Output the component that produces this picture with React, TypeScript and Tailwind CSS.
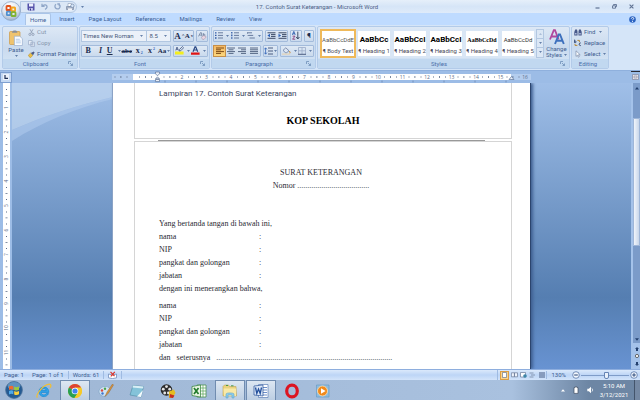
import type { ReactNode } from 'react';

// ── Data ──────────────────────────────────────────────────────────────────────

const tabs = ['Home', 'Insert', 'Page Layout', 'References', 'Mailings', 'Review', 'View'];

const styleItems = [
  { name: 'Body Text', sample: 'AaBbCcDdE', look: 'text-[6px] text-[#555]' },
  { name: 'Heading 1', sample: 'AaBbCc', look: 'text-[8px] font-bold text-black' },
  { name: 'Heading 2', sample: 'AaBbCcI', look: 'text-[8px] font-bold text-black' },
  { name: 'Heading 3', sample: 'AaBbCcI', look: 'text-[8px] font-bold text-black' },
  { name: 'Heading 4', sample: 'AaBbCcDd', look: "text-[6px] font-bold text-black font-['Liberation_Serif',serif]" },
  { name: 'Heading 5', sample: 'AaBbCcDd', look: 'text-[6px] text-[#333]' },
];

const fields = ['nama', 'NIP', 'pangkat dan golongan', 'jabatan'];

// ── Small drawings ────────────────────────────────────────────────────────────

function Caret({ className = '' }: { className?: string }) {
  return (
    <svg width="3" height="2" viewBox="0 0 4 2" className={`shrink-0 ${className}`} aria-hidden="true">
      <path d="M0 0h4L2 2z" fill="#3e5f92" />
    </svg>
  );
}

function Launcher() {
  return (
    <svg width="5" height="5" viewBox="0 0 5 5" fill="none" stroke="#6f8fb8" aria-hidden="true">
      <path d="M.5 3V.5H3M2 2l2.5 2.5M4.5 2.5v2h-2" strokeWidth=".8" />
    </svg>
  );
}

function OfficeLogo() {
  return (
    <svg width="20" height="20" viewBox="0 0 20 20" aria-hidden="true">
      <defs>
        <radialGradient id="orb" cx=".45" cy=".25" r=".8">
          <stop offset="0" stopColor="#fff" />
          <stop offset=".55" stopColor="#dfe5ee" />
          <stop offset="1" stopColor="#93a8c6" />
        </radialGradient>
      </defs>
      <circle cx="10" cy="10" r="9.4" fill="url(#orb)" stroke="#8ba3c4" strokeWidth=".8" />
      <g fill="none" strokeWidth="1.8">
        <rect x="5.5" y="5" width="4" height="4" rx=".6" stroke="#e2531c" />
        <rect x="10.5" y="6.5" width="3.6" height="3.6" rx=".6" stroke="#f3a51d" />
        <rect x="5.8" y="10.6" width="3.6" height="3.6" rx=".6" stroke="#4f8fd0" />
        <rect x="10.5" y="11.2" width="4" height="3.8" rx=".6" stroke="#7fb335" />
      </g>
    </svg>
  );
}

function SaveIcon() {
  return (
    <svg width="8" height="8" viewBox="0 0 8 8" aria-hidden="true">
      <path d="M.5.5h7v7h-6l-1-1z" fill="#5350a8" />
      <path d="M2 .5h4.2v3H2z" fill="#eef1ff" />
      <path d="M2.2 5h3.6v2.5H2.2z" fill="#c9cdf0" />
      <path d="M3 5.5h1v2H3z" fill="#3a3785" />
    </svg>
  );
}

function ArrowBackIcon() {
  return (
    <svg width="7" height="7" viewBox="0 0 7 7" fill="none" stroke="#8fa6c8" strokeWidth="1.3" aria-hidden="true">
      <path d="M1 .8v2.6h2.6M1.2 3.2C3 1 6.3 1.6 6 4.2 5.8 5.4 5 6 4 6.4" />
    </svg>
  );
}

function RepeatIcon() {
  return (
    <svg width="7" height="7" viewBox="0 0 7 7" fill="none" stroke="#8fa6c8" strokeWidth="1.3" aria-hidden="true">
      <path d="M2 1.2A2.6 2.6 0 1 0 5.3 1.4M5.3 3.2V1h-2" />
    </svg>
  );
}

function PrintIcon() {
  return (
    <svg width="9" height="8" viewBox="0 0 9 8" aria-hidden="true">
      <path d="M2 .5h3.5v3H2z" fill="#fff" stroke="#8a9bb5" strokeWidth=".6" />
      <path d="M.5 3.5h7v3h-7z" fill="#a5b0c4" stroke="#71819d" strokeWidth=".6" />
      <path d="M2 5.4h4v2H2z" fill="#f4f6fa" />
      <circle cx="6.4" cy="2.8" r="1.7" fill="#d9e8fa" stroke="#7288a8" strokeWidth=".7" />
    </svg>
  );
}

function PasteIcon() {
  return (
    <svg width="14" height="16" viewBox="0 0 14 16" aria-hidden="true">
      <rect x=".5" y="1.5" width="10.5" height="13" rx="1" fill="#efc36e" stroke="#cc9a48" strokeWidth=".7" />
      <path d="M3 2.8C3 1 4.4.4 5.8.4S8.4 1 8.4 2.8z" fill="#8b8f98" />
      <path d="M5.4 6.2h5.4l2.6 2.5v6.8h-8z" fill="#f8fbff" stroke="#9aafd0" strokeWidth=".7" />
      <path d="M6.8 9.3h4M6.8 11h5M6.8 12.8h5" stroke="#9dbbe4" strokeWidth=".7" />
    </svg>
  );
}

function CutIcon() {
  return (
    <svg width="7" height="7" viewBox="0 0 7 7" fill="none" stroke="#93a1b8" aria-hidden="true">
      <path d="M2 .3l2.3 4M5 .3L2.7 4.3" strokeWidth=".9" />
      <circle cx="1.9" cy="5.4" r="1.1" strokeWidth=".9" />
      <circle cx="5" cy="5.4" r="1.1" strokeWidth=".9" />
    </svg>
  );
}

function CopyIcon() {
  return (
    <svg width="7" height="7" viewBox="0 0 7 7" fill="#e6edf7" stroke="#9aabc5" strokeWidth=".7" aria-hidden="true">
      <path d="M.5.5h3.7v4.2H.5zM2.8 2.3h3.7v4.2H2.8z" />
      <path d="M3.6 3.8h2M3.6 5h2" />
    </svg>
  );
}

function PainterIcon() {
  return (
    <svg width="7" height="7" viewBox="0 0 7 7" aria-hidden="true">
      <path d="M.3 4.2L2.6 2l2.2 2.2-2.2 2.5C1.6 6.4.8 5.4.3 4.2z" fill="#e8bf4b" stroke="#a97c1c" strokeWidth=".4" />
      <path d="M2.8 1.9L5.6.4l1 1L5 4.2z" fill="#4f5d86" />
    </svg>
  );
}

function ClearFormatIcon() {
  return (
    <svg width="9" height="8" viewBox="0 0 9 8" aria-hidden="true">
      <path d="M.5 4.4l2-3.8h.8L4 4.4M1.4 3.1h2.2M5.3 1v3M5.3 2.6c2-1.2 2.6 1.6.3 1.4" stroke="#6f7f9c" strokeWidth=".8" fill="none" />
      <path d="M3.4 5.4l2.4-1.8 2.4 1.3L6 7.4H4.6z" fill="#ecd6e2" stroke="#9a8ba5" strokeWidth=".5" />
    </svg>
  );
}

function HighlightIcon() {
  return (
    <svg width="9" height="9" viewBox="0 0 9 9" aria-hidden="true">
      <path d="M0 5.4h8.6v3H0z" fill="#f4ee1d" />
      <path d="M4.6 3.4L7.4.5l1.2 1.2-2.8 3-1.6.3zM.8 4.4L2 1l1.4 3.4M1.2 3.4h1.7" fill="none" stroke="#50638c" strokeWidth=".9" />
    </svg>
  );
}

function FontColorIcon() {
  return (
    <svg width="9" height="9" viewBox="0 0 9 9" aria-hidden="true">
      <path d="M0 6.4h8.6v2.3H0z" fill="#e01414" />
      <path d="M2 5.8L4 .8h.7l2 5M2.8 4h3.2" fill="none" stroke="#2d4a86" strokeWidth="1.2" />
    </svg>
  );
}

function ListIcon({ kind }: { kind: 'bullet' | 'number' | 'multi' }) {
  return (
    <svg width="8" height="7" viewBox="0 0 8 7" stroke="#5b6f94" strokeWidth=".9" aria-hidden="true">
      {kind === 'multi' ? (
        <path d="M0 .8h5M1.6 3.4h4.6M3.4 6h4.4M.4.8v.8M1.2 3v1M3 5.5v1" />
      ) : (
        <>
          <path d="M3 .8h5M3 3.4h5M3 6h5" />
          <path d={kind === 'bullet' ? 'M0 .8h1.5M0 3.4h1.5M0 6h1.5' : 'M.8 0v1.6M.8 2.6v1.6M.8 5.2v1.6'} stroke="#2f59a6" strokeWidth="1.3" />
        </>
      )}
    </svg>
  );
}

function IndentIcon({ out = false }: { out?: boolean }) {
  return (
    <svg width="9" height="8" viewBox="0 0 9 8" aria-hidden="true">
      <path d="M.5.8h8M4 2.6h4.5M4 4.4h4.5M.5 6.3h8" stroke="#3c4a66" strokeWidth="1" />
      <path d={out ? 'M3 1.8L.4 3.5 3 5.2z' : 'M.5 1.8l2.6 1.7L.5 5.2z'} fill="#2e62b8" />
    </svg>
  );
}

function SortIcon() {
  return (
    <svg width="8" height="9" viewBox="0 0 8 9" fill="none" strokeWidth=".9" aria-hidden="true">
      <path d="M.4 3.8L1.8.4l1.4 3.4M.9 2.8h1.8" stroke="#2e5cad" />
      <path d="M.6 5.2h2.4L.6 8.2h2.6" stroke="#8b3e7c" />
      <path d="M5.8.6v7M4.2 6l1.6 2L7.4 6" stroke="#33415c" />
    </svg>
  );
}

function AlignIcon({ kind }: { kind: 'left' | 'center' | 'right' | 'justify' }) {
  const lines = {
    left: 'M0 1h8M0 2.8h5M0 4.6h8M0 6.4h5',
    center: 'M0 1h8M1.5 2.8h5M0 4.6h8M1.5 6.4h5',
    right: 'M0 1h8M3 2.8h5M0 4.6h8M3 6.4h5',
    justify: 'M0 1h8M0 2.8h8M0 4.6h8M0 6.4h8',
  };
  return (
    <svg width="8" height="8" viewBox="0 0 8 8" stroke={kind === 'left' ? '#7c4a17' : '#566784'} strokeWidth="1" aria-hidden="true">
      <path d={lines[kind]} />
    </svg>
  );
}

function SpacingIcon() {
  return (
    <svg width="9" height="8" viewBox="0 0 9 8" fill="none" aria-hidden="true">
      <path d="M4 1h5M4 4h5M4 7h5" stroke="#4b5d80" />
      <path d="M1.6 1v6M.3 2.4L1.6.8l1.3 1.6M.3 5.6l1.3 1.6 1.3-1.6" stroke="#2e62b8" strokeWidth=".8" />
    </svg>
  );
}

function BucketIcon() {
  return (
    <svg width="9" height="8" viewBox="0 0 9 8" aria-hidden="true">
      <path d="M1 3.4L3.8.8 7 3.8 4 6.2z" fill="#dce6f4" stroke="#5b6f94" strokeWidth=".7" />
      <path d="M7.2 4c1 1 1 2 .6 2.4" stroke="#c9862b" fill="none" />
      <path d="M0 6.6h8v1.2H0z" fill="#e6d5b8" />
    </svg>
  );
}

function BorderIcon() {
  return (
    <svg width="8" height="8" viewBox="0 0 8 8" fill="none" aria-hidden="true">
      <path d="M.5.5h7v6.5M.5.5V7M4 .5V7M.5 3.8h7" stroke="#9aabc8" strokeWidth=".8" />
      <path d="M0 7.3h8" stroke="#4b5d80" />
    </svg>
  );
}

function ChangeStylesIcon() {
  return (
    <svg width="16" height="16" viewBox="0 0 16 16" fill="none" aria-hidden="true">
      <path d="M1 10.5L4.8 1.2h1.2l3.6 9.3M2.4 7.5H8" stroke="#b0479f" strokeWidth="1.8" />
      <path d="M6 15l3.8-9.6H11L14.8 15M7.6 11.8h5.8" stroke="#3d70bd" strokeWidth="1.9" />
    </svg>
  );
}

function FindIcon() {
  return (
    <svg width="8" height="7" viewBox="0 0 8 7" fill="#48598a" aria-hidden="true">
      <path d="M1.2.5h1.8l.5 2v4H.3V3zM5 .5h1.8L7.7 3v3.5H4.5v-4z" />
      <path d="M1 4h1.6v1.6H1zM5.2 4h1.6v1.6H5.2z" fill="#aebcdc" />
    </svg>
  );
}

function ReplaceIcon() {
  return (
    <svg width="8" height="8" viewBox="0 0 8 8" fill="none" strokeWidth=".9" aria-hidden="true">
      <path d="M.6.6v3.2M.6 2.4c2-1 2.2 1.6 0 1.3" stroke="#2f4470" />
      <path d="M6.8 4c-2-.6-2.4 3 0 2.6" stroke="#2f4470" />
      <path d="M3.4 1.4h2v1.8M1 5v1.4h2.4" stroke="#b5801f" />
    </svg>
  );
}

function SelectIcon() {
  return (
    <svg width="8" height="8" viewBox="0 0 8 8" aria-hidden="true">
      <path d="M2 .8v5.6l1.4-1.2.9 2 1-.5-.9-1.9h1.8z" fill="#fff" stroke="#7a8aa8" strokeWidth=".7" />
    </svg>
  );
}

function HelpIcon() {
  return (
    <svg width="7" height="7" viewBox="0 0 7 7" aria-hidden="true">
      <circle cx="3.5" cy="3.5" r="3.3" fill="#2b63c1" />
      <path d="M2.3 2.6c.2-1.6 2.6-1.4 2.4 0-.1.8-1.2.8-1.2 1.7M3.5 5v.9" stroke="#fff" strokeWidth=".9" fill="none" />
    </svg>
  );
}

// ── Shared pieces ─────────────────────────────────────────────────────────────

function Tool({ label, children, active = false }: { label: string; children: ReactNode; active?: boolean }) {
  return (
    <button
      type="button"
      aria-label={label}
      className={`flex h-full flex-1 items-center justify-center gap-px text-[#1c2c4e] ${
        active ? 'bg-gradient-to-b from-[#f5b865] to-[#fbd77c] outline outline-[#c58f4a]' : ''
      }`}
    >
      {children}
    </button>
  );
}

function ToolGroup({ className, children }: { className: string; children: ReactNode }) {
  return (
    <div className={`flex h-3 items-center rounded-[1px] border border-[#a3bbdb] bg-gradient-to-b from-[#dfe9f5] to-[#cadaed] ${className}`}>
      {children}
    </div>
  );
}

function Group({ title, className, launcher = true, children }: { title: string; className: string; launcher?: boolean; children: ReactNode }) {
  return (
    <section
      aria-label={title}
      className={`flex h-full shrink-0 flex-col overflow-hidden rounded-[2px] border border-[#b3cbe9] bg-gradient-to-b from-[#dde8f5] via-[#c9daee] to-[#d6e6f7] ${className}`}
    >
      <div className="flex flex-1 items-center">{children}</div>
      <div className="flex h-[9px] items-center bg-[#c1d8f0] pr-1 text-[#4a6ea9]">
        <span className="flex-1 text-center">{title}</span>
        {launcher && <Launcher />}
      </div>
    </section>
  );
}

// ── Window top ────────────────────────────────────────────────────────────────

function TitleBar() {
  return (
    <header className="flex h-[13px] shrink-0 items-center bg-gradient-to-b from-[#e6effa] via-[#d6e5f7] to-[#dfebfa] text-[#4d6185]">
      <div className="flex flex-1 items-center">
        <div className="ml-5 flex h-3 w-[57px] items-center gap-[5px] rounded-r-full border border-[#b4c9e4] bg-[#dbe7f6] pl-1.5">
          <button type="button" aria-label="Save"><SaveIcon /></button>
          <button type="button" aria-label="Undo" className="ml-px"><ArrowBackIcon /></button>
          <button type="button" aria-label="Repeat" className="ml-px"><RepeatIcon /></button>
          <button type="button" aria-label="Print Preview"><PrintIcon /></button>
        </div>
        <Caret className="ml-1" />
      </div>
      <h1 className="whitespace-nowrap">17. Contoh Surat Keterangan - Microsoft Word</h1>
      <div className="flex flex-1 items-center justify-end gap-3 pr-1.5">
        <button type="button" aria-label="Minimize">
          <svg width="5" height="5" viewBox="0 0 5 5" aria-hidden="true"><path d="M.5 4h4" stroke="#5f7293" strokeWidth="1.2" /></svg>
        </button>
        <button type="button" aria-label="Restore">
          <svg width="5" height="5" viewBox="0 0 5 5" fill="none" stroke="#5f7293" strokeWidth=".9" aria-hidden="true"><path d="M1.5 1.5v-1h3v2.2h-1M.5 1.8h3v2.4h-3z" /></svg>
        </button>
        <button type="button" aria-label="Close">
          <svg width="5" height="5" viewBox="0 0 5 5" stroke="#5f7293" strokeWidth="1.1" aria-hidden="true"><path d="M.6.6l3.8 3.8M4.4.6L.6 4.4" /></svg>
        </button>
      </div>
    </header>
  );
}

function TabRow() {
  return (
    <nav aria-label="Ribbon tabs" className="flex h-3 shrink-0 items-center bg-[#bfdbff] pr-1 pl-[25px] text-[#3c5f96]">
      {tabs.map((tab, i) => (
        <button
          key={tab}
          type="button"
          className={`h-full whitespace-nowrap ${i === 0 ? 'mr-px rounded-t-[2px] border border-b-0 border-[#a9c4e8] bg-[#e6f0fb] px-1' : 'px-[7px]'}`}
        >
          {tab}
        </button>
      ))}
      <button type="button" aria-label="Help" className="ml-auto"><HelpIcon /></button>
    </nav>
  );
}

function ClipboardGroup() {
  return (
    <Group title="Clipboard" className="w-[76px]">
      <button type="button" className="flex w-6 shrink-0 flex-col items-center pl-0.5 text-[#3d5c8f]">
        <PasteIcon />
        <span>Paste</span>
        <Caret className="mt-px" />
      </button>
      <div className="flex flex-col gap-[3px] pl-px whitespace-nowrap text-[#8595ae]">
        <button type="button" className="flex items-center gap-0.5"><CutIcon />Cut</button>
        <button type="button" className="flex items-center gap-0.5"><CopyIcon />Copy</button>
        <button type="button" className="flex items-center gap-0.5 text-[#3d5c8f]"><PainterIcon />Format Painter</button>
      </div>
    </Group>
  );
}

function FontGroup() {
  return (
    <Group title="Font" className="w-[131px]">
      <div className="flex w-full flex-col gap-[3px] px-px">
        <div className="flex items-center">
          <div className="relative w-[67px]">
            <select aria-label="Font name" className="h-3 w-full appearance-none border border-[#b2c7e1] bg-[#ebf1f9] pl-px text-[#46587a]">
              <option>Times New Roman</option>
            </select>
            <Caret className="pointer-events-none absolute top-[5px] right-1" />
          </div>
          <div className="relative w-6">
            <select aria-label="Font size" className="h-3 w-full appearance-none border border-l-0 border-[#b2c7e1] bg-[#ebf1f9] pl-0.5 text-[#46587a]">
              <option>8.5</option>
            </select>
            <Caret className="pointer-events-none absolute top-[5px] right-1" />
          </div>
          <ToolGroup className="ml-0.5 w-[21px] font-['Liberation_Serif',serif] font-bold">
            <Tool label="Grow font"><span className="text-[9px]">A</span><span className="text-[5px]">^</span></Tool>
            <Tool label="Shrink font"><span className="text-[7px]">A</span><span className="text-[4px]">v</span></Tool>
          </ToolGroup>
          <ToolGroup className="ml-0.5 w-3">
            <Tool label="Clear formatting"><ClearFormatIcon /></Tool>
          </ToolGroup>
        </div>
        <div className="flex items-center">
          <ToolGroup className="w-[91px] font-['Liberation_Serif',serif] font-bold">
            <Tool label="Bold"><span className="text-[8px]">B</span></Tool>
            <Tool label="Italic"><span className="text-[8px] italic">I</span></Tool>
            <Tool label="Underline"><span className="text-[8px] underline">U</span><Caret className="ml-1" /></Tool>
            <Tool label="Strikethrough"><span className="text-[7px] line-through">abc</span></Tool>
            <Tool label="Subscript"><span className="text-[8px]">x</span><span className="pt-1 text-[4px] text-[#2e62b8]">2</span></Tool>
            <Tool label="Superscript"><span className="text-[8px]">x</span><span className="pb-1 text-[4px] text-[#2e62b8]">2</span></Tool>
            <Tool label="Change case"><span className="text-[7px]">Aa</span><Caret /></Tool>
          </ToolGroup>
          <ToolGroup className="ml-0.5 w-[35px]">
            <Tool label="Highlight color"><HighlightIcon /><Caret className="ml-0.5" /></Tool>
            <Tool label="Font color"><FontColorIcon /><Caret className="ml-0.5" /></Tool>
          </ToolGroup>
        </div>
      </div>
    </Group>
  );
}

function ParagraphGroup() {
  return (
    <Group title="Paragraph" className="w-[105px]">
      <div className="flex w-full flex-col gap-[3px] px-px">
        <div className="flex items-center gap-0.5">
          <ToolGroup className="w-[51px]">
            <Tool label="Bullets"><ListIcon kind="bullet" /><Caret className="ml-0.5" /></Tool>
            <Tool label="Numbering"><ListIcon kind="number" /><Caret className="ml-0.5" /></Tool>
            <Tool label="Multilevel list"><ListIcon kind="multi" /><Caret className="ml-0.5" /></Tool>
          </ToolGroup>
          <ToolGroup className="w-[23px]">
            <Tool label="Decrease indent"><IndentIcon out /></Tool>
            <Tool label="Increase indent"><IndentIcon /></Tool>
          </ToolGroup>
          <ToolGroup className="w-3"><Tool label="Sort"><SortIcon /></Tool></ToolGroup>
          <ToolGroup className="w-2.5"><Tool label="Show marks"><span className="text-[8px]">¶</span></Tool></ToolGroup>
        </div>
        <div className="flex items-center gap-0.5">
          <ToolGroup className="w-12">
            <Tool label="Align left" active><AlignIcon kind="left" /></Tool>
            <Tool label="Center"><AlignIcon kind="center" /></Tool>
            <Tool label="Align right"><AlignIcon kind="right" /></Tool>
            <Tool label="Justify"><AlignIcon kind="justify" /></Tool>
          </ToolGroup>
          <ToolGroup className="w-4"><Tool label="Line spacing"><SpacingIcon /><Caret /></Tool></ToolGroup>
          <ToolGroup className="w-[34px]">
            <Tool label="Shading"><BucketIcon /><Caret className="ml-0.5" /></Tool>
            <Tool label="Borders"><BorderIcon /><Caret className="ml-0.5" /></Tool>
          </ToolGroup>
        </div>
      </div>
    </Group>
  );
}

function StylesGroup() {
  return (
    <Group title="Styles" className="w-[253px]">
      <div className="flex h-[29px] flex-1 items-stretch bg-[#d9e6f5] pl-0.5">
        {styleItems.map((item, i) => (
          <button
            key={item.name}
            type="button"
            className={`flex w-9 flex-col items-center justify-between border-2 bg-white pt-1 pb-px whitespace-nowrap ${
              i === 0 ? 'border-[#efb95a]' : 'border-[#d9e6f5]'
            }`}
          >
            <span className={`h-2.5 leading-[10px] ${item.look}`}>{item.sample}</span>
            <span className="text-[#4a4a5a]">¶ {item.name}</span>
          </button>
        ))}
        <div className="flex w-2 flex-col border border-[#b2c7e1] bg-[#dbe7f5]">
          <button type="button" aria-label="Scroll up" className="flex flex-1 items-center justify-center border-b border-[#b2c7e1]"><Caret className="rotate-180 opacity-40" /></button>
          <button type="button" aria-label="Scroll down" className="flex flex-1 items-center justify-center border-b border-[#b2c7e1]"><Caret /></button>
          <button type="button" aria-label="More styles" className="flex flex-1 items-center justify-center"><Caret /></button>
        </div>
      </div>
      <button type="button" className="flex w-[25px] shrink-0 flex-col items-center text-[#3d5c8f]">
        <ChangeStylesIcon />
        <span className="leading-[7px]">Change</span>
        <span className="flex items-center gap-0.5 leading-[6px]">Styles<Caret /></span>
      </button>
    </Group>
  );
}

function EditingGroup() {
  return (
    <Group title="Editing" className="w-[38px]" launcher={false}>
      <div className="flex flex-col gap-[3px] pl-0.5 whitespace-nowrap text-[#3d5c8f]">
        <button type="button" className="flex items-center gap-0.5"><FindIcon />Find<Caret className="ml-0.5" /></button>
        <button type="button" className="flex items-center gap-0.5"><ReplaceIcon />Replace</button>
        <button type="button" className="flex items-center gap-0.5"><SelectIcon />Select<Caret /></button>
      </div>
    </Group>
  );
}

// ── Rulers ────────────────────────────────────────────────────────────────────

const UNIT = 24.5;

function HorizontalRuler() {
  return (
    <svg width="419" height="12" viewBox="0 0 419 12" fontSize="5" fontFamily="Open Sans, sans-serif" fill="#5b6c88" textAnchor="middle" aria-hidden="true">
      <path d="M0 3h419v6H0z" fill="#b4cdee" />
      <path d="M21 3h378v6H21z" fill="#fff" />
      {Array.from({ length: 17 }, (_, i) => {
        const x = 21 + i * UNIT;
        return (
          <g key={i}>
            {i > 1 && i < 17 && <text x={x} y="8">{i}</text>}
            <path d={`M${x - 18.5} 5.5h1v1h-1zM${x - 12.5} 5h.8v2h-.8zM${x - 6.5} 5.5h1v1h-1z`} />
          </g>
        );
      })}
      {Array.from({ length: 12 }, (_, i) => (
        <path key={i} d={`M${53 + i * 31} 9.5v2`} stroke="#6c86ad" strokeWidth=".8" />
      ))}
      <g fill="#e8eef8" stroke="#5f7498" strokeWidth=".7">
        <path d="M43.5 1h4v1.8l-2 2-2-2zM43.5 8l2-2.2 2 2.2zM43.5 8.4h4v2.2h-4z" />
        <path d="M397 8.5l2.5-3 2.5 3z" />
      </g>
    </svg>
  );
}

function VerticalRuler() {
  return (
    <svg className="ml-[3px] h-full w-[7px] shrink-0 bg-white" fontSize="5" fontFamily="Open Sans, sans-serif" fill="#5b6c88" textAnchor="middle" aria-hidden="true">
      {Array.from({ length: 12 }, (_, i) => {
        const y = i * UNIT;
        return (
          <g key={i}>
            {i > 0 && <text x="0" y="0" transform={`translate(5 ${y}) rotate(-90)`}>{i}</text>}
            <path d={`M3 ${y + 6}h1v1H3zM2.5 ${y + 12}h2v.8h-2zM3 ${y + 18}h1v1H3z`} />
          </g>
        );
      })}
    </svg>
  );
}

// ── Document ──────────────────────────────────────────────────────────────────

function FieldList() {
  return (
    <dl className="grid grid-cols-[100px_1fr]">
      {fields.map((field) => (
        <div key={field} className="contents">
          <dt>{field}</dt>
          <dd>:</dd>
        </div>
      ))}
    </dl>
  );
}

function DocumentPage() {
  return (
    <article className="flex w-[419px] flex-col border-r border-l border-r-[#2c456e] border-l-[#8ba3c6] bg-white pr-[18px] pl-[21px] font-['Liberation_Serif',serif] text-[8px] leading-[13px] text-[#2a2a33] shadow-[2px_0_3px_#3f5f90]">
      <div className="h-14 shrink-0 border border-t-0 border-[#d5d5d5] pl-6">
        <p className="pt-1 font-[Roboto,sans-serif] text-[8px] text-[#3a4560]">Lampiran 17. Contoh Surat Keterangan</p>
        <p className="pt-3.5 pr-6 text-center text-[10px] font-bold text-black">KOP SEKOLAH</p>
      </div>
      <div className="mr-[27px] ml-6 h-0.5 shrink-0 border-b border-[#999]" />
      <div className="flex-1 border border-b-0 border-[#d5d5d5] pl-6">
        <div className="pt-6 pr-7 text-center">
          <h2>SURAT KETERANGAN</h2>
          <p>Nomor ....................................</p>
        </div>
        <p className="pt-[25px]">Yang bertanda tangan di bawah ini,</p>
        <FieldList />
        <p className="pb-1">dengan ini menerangkan bahwa,</p>
        <FieldList />
        <p className="flex gap-1.5">
          <span>dan</span>
          <span>seterusnya</span>
          <span>........................................................................................</span>
        </p>
      </div>
    </article>
  );
}

function ScrollRail() {
  return (
    <div className="flex w-[9px] shrink-0 flex-col items-center bg-[#a4c2ea] pl-0.5">
      <div className="flex h-[35px] w-full justify-center bg-[#7b9bc9] pt-1">
        <svg width="4" height="3" viewBox="0 0 4 3" aria-hidden="true"><path d="M0 2.5L2 0l2 2.5z" fill="#23406e" /></svg>
      </div>
      <div className="w-full flex-[4] rounded-[1px] border border-[#9fb6d8] bg-gradient-to-r from-[#f1f5fb] to-[#c8d6ea]" />
      <div className="flex w-full flex-[3] items-end justify-center bg-[#7b9bc9] pb-0.5">
        <svg width="4" height="3" viewBox="0 0 4 3" aria-hidden="true"><path d="M0 .3h4l-2 2.5z" fill="#23406e" /></svg>
      </div>
      <div className="flex h-[26px] w-full flex-col items-center justify-evenly">
        <svg width="4" height="4" viewBox="0 0 4 4" aria-hidden="true"><path d="M0 2l2-2 2 2zM1 2h2v2H1z" fill="#23406e" /></svg>
        <svg width="4" height="4" viewBox="0 0 4 4" aria-hidden="true"><circle cx="2" cy="2" r="1.6" fill="#fff" stroke="#4a4a4a" strokeWidth=".8" /></svg>
        <svg width="4" height="4" viewBox="0 0 4 4" aria-hidden="true"><path d="M1 0h2v2H1zM0 2h4L2 4z" fill="#23406e" /></svg>
      </div>
    </div>
  );
}

// ── Status bar ────────────────────────────────────────────────────────────────

function StatusBar() {
  return (
    <footer className="flex h-[11px] shrink-0 items-center border-t border-[#8eaede] bg-gradient-to-b from-[#dbe9fb] via-[#bdd5f6] to-[#d3e4fa] text-[#3d5c8f]">
      <span className="pl-1">Page: 1</span>
      <span className="pr-1 pl-2">Page: 1 of 1</span>
      <span className="border-x border-[#9fbbe2] px-1">Words: 61</span>
      <span className="border-r border-[#9fbbe2] px-1">
        <svg width="9" height="8" viewBox="0 0 9 8" aria-hidden="true">
          <path d="M.5 3l4 1 4-1v3.8l-4 .8-4-.8z" fill="#fff" stroke="#6483b4" strokeWidth=".7" />
          <path d="M2.5.8l4 4.4M6.8.8L2.8 5.4" stroke="#d9342b" strokeWidth="1.2" />
        </svg>
      </span>
      <div className="ml-auto flex h-full items-center gap-px border-l border-[#9fbbe2] pl-0.5">
        <button type="button" aria-label="Print layout" className="flex h-[9px] w-[9px] items-center justify-center border border-[#dd9f45] bg-[#fcd58a]">
          <svg width="5" height="6" viewBox="0 0 5 6" aria-hidden="true"><path d="M.5.5h4v5h-4z" fill="#fff" stroke="#6a7a96" strokeWidth=".7" /></svg>
        </button>
        <button type="button" aria-label="Full screen reading" className="flex w-2 justify-center">
          <svg width="7" height="6" viewBox="0 0 7 6" fill="#eef3fb" stroke="#6a7a96" strokeWidth=".7" aria-hidden="true"><path d="M.4.8h3v4h-3zM3.5.8h3v4h-3z" /></svg>
        </button>
        <button type="button" aria-label="Web layout" className="flex w-2 justify-center">
          <svg width="7" height="6" viewBox="0 0 7 6" aria-hidden="true"><path d="M.5.5h5v4.5h-5z" fill="#fff" stroke="#6a7a96" strokeWidth=".7" /><circle cx="5" cy="4" r="1.8" fill="#3f86a8" /></svg>
        </button>
        <button type="button" aria-label="Outline" className="flex w-2 justify-center">
          <svg width="6" height="6" viewBox="0 0 6 6" stroke="#8596b2" aria-hidden="true"><path d="M.5 1h4M2 3h4M.5 5h4" /></svg>
        </button>
        <button type="button" aria-label="Draft" className="flex w-[9px] justify-center">
          <svg width="6" height="6" viewBox="0 0 6 6" stroke="#7488aa" aria-hidden="true"><path d="M0 1h6M0 3h6M0 5h6" strokeWidth="1.3" /></svg>
        </button>
      </div>
      <span className="border-l border-[#9fbbe2] pr-1.5 pl-1">130%</span>
      <button type="button" aria-label="Zoom out">
        <svg width="8" height="8" viewBox="0 0 8 8" aria-hidden="true"><circle cx="4" cy="4" r="3.3" fill="#f3f7fd" stroke="#5876a8" strokeWidth=".8" /><path d="M2.2 4h3.6" stroke="#33507f" strokeWidth="1.1" /></svg>
      </button>
      <input
        type="range"
        aria-label="Zoom"
        min="0"
        max="100"
        defaultValue="54"
        className="mx-px h-2 w-12 appearance-none bg-transparent [&::-webkit-slider-runnable-track]:h-px [&::-webkit-slider-runnable-track]:bg-[#7f9cc8] [&::-webkit-slider-thumb]:-mt-[3px] [&::-webkit-slider-thumb]:h-[7px] [&::-webkit-slider-thumb]:w-[5px] [&::-webkit-slider-thumb]:appearance-none [&::-webkit-slider-thumb]:rounded-b-[2px] [&::-webkit-slider-thumb]:border [&::-webkit-slider-thumb]:border-[#6785b6] [&::-webkit-slider-thumb]:bg-[#e9f1fb]"
      />
      <button type="button" aria-label="Zoom in" className="pr-0.5">
        <svg width="8" height="8" viewBox="0 0 8 8" aria-hidden="true"><circle cx="4" cy="4" r="3.3" fill="#f3f7fd" stroke="#5876a8" strokeWidth=".8" /><path d="M2.2 4h3.6M4 2.2v3.6" stroke="#33507f" strokeWidth="1.1" /></svg>
      </button>
    </footer>
  );
}

// ── Taskbar ───────────────────────────────────────────────────────────────────

const apps: { label: string; open?: boolean; icon: ReactNode }[] = [
  {
    label: 'Internet Explorer',
    icon: (
      <>
        <path d="M12.8 9.4H5.2c.3 3 4.2 3.2 5 1.2h2.3C10.6 15.2 3 14.5 3 8.6 3 2.4 13 2.3 12.8 9.4zM5.3 7.6h4.9c-.3-2.6-4.4-2.6-4.9 0z" fill="#35a4e6" stroke="#1b8cd8" strokeWidth=".8" />
        <path d="M1.4 14.6C-.8 12 7 1.6 13.4 1.2c2 0 1.7 2 .8 3.5" fill="none" stroke="#f0bf34" strokeWidth="1.2" />
      </>
    ),
  },
  {
    label: 'Chrome',
    open: true,
    icon: (
      <>
        <circle cx="8" cy="8" r="7" fill="#f6c927" />
        <path d="M8 8L1.9 4.5A7 7 0 0 1 14.1 4.6z" fill="#dd4335" />
        <path d="M1.9 4.5A7 7 0 0 0 7.5 15L11 9.7 8 8z" fill="#28a052" />
        <path d="M14.1 4.6H8v4.2l3 .7L7.5 15A7 7 0 0 0 14.1 4.6z" fill="#f6c927" />
        <circle cx="8" cy="8" r="3.3" fill="#fff" />
        <circle cx="8" cy="8" r="2.6" fill="#4285f0" />
      </>
    ),
  },
  {
    label: 'Paint',
    icon: (
      <>
        <path d="M1 8.5C1 5 5 3 8.5 3.6c4 .6 4.5 4 2 5.4-1 .6-.4 2-1.5 3.2C6.8 14.5 1 13 1 8.5z" fill="#cfe3f4" stroke="#7b9dbf" strokeWidth=".6" />
        <circle cx="4" cy="7.5" r="1.2" fill="#d84a3c" />
        <circle cx="7" cy="5.8" r="1.2" fill="#4aa24c" />
        <circle cx="4.5" cy="10.5" r="1.2" fill="#3d74ce" />
        <path d="M14.5 1L9 9l-2 4.5L10.5 10 15.5 2z" fill="#d9943d" stroke="#8b5a23" strokeWidth=".4" />
      </>
    ),
  },
  {
    label: 'Notepad',
    icon: (
      <>
        <path d="M4 2.5l10.500 1L12 14 1 12z" fill="#84c3d9" stroke="#4e8ba3" strokeWidth=".6" />
        <path d="M4 2.5l10.500 1-.6 2-10.500-1z" fill="#d9eef5" />
        <path d="M8 13.4L14 7l-2 7z" fill="#f4fafc" />
      </>
    ),
  },
  {
    label: 'Movie player',
    icon: (
      <>
        <circle cx="6.5" cy="7" r="5.8" fill="#2d2d2d" />
        <g fill="#e6e6e6">
          <circle cx="6.5" cy="3.6" r="1.4" />
          <circle cx="3.3" cy="6.2" r="1.4" />
          <circle cx="9.7" cy="6.2" r="1.4" />
          <circle cx="4.7" cy="10" r="1.4" />
          <circle cx="8.4" cy="10" r="1.4" />
        </g>
        <path d="M9 8.5l5-2 1.5 3.5-3 4.5-3.5.5z" fill="#e5bd20" />
        <path d="M10 11l4.500 1.5-1.500 2.500-3.500-.5z" fill="#c72f1f" />
      </>
    ),
  },
  {
    label: 'Excel',
    icon: (
      <>
        <path d="M6 2h9v12H6z" fill="#fff" stroke="#3c8a3c" strokeWidth=".7" />
        <path d="M6 5h9M6 8h9M6 11h9M12 2v12" stroke="#57a457" strokeWidth=".7" />
        <path d="M1 3.5L9.500 2v12L1 12.5z" fill="#e8f5e2" stroke="#2e7d32" strokeWidth=".7" />
        <path d="M3 5l4.500 6M7.500 5L3 11" stroke="#217a2b" strokeWidth="1.7" />
      </>
    ),
  },
  {
    label: 'Explorer',
    open: true,
    icon: (
      <>
        <path d="M1 3.5L2.500 2h4l1 1.500H14l.5 9.500H1z" fill="#ead27d" stroke="#b99b44" strokeWidth=".5" />
        <path d="M1.500 5.500h12.500v7.500h-12z" fill="#f8e9a8" />
        <path d="M4 2.500h2M9 2.800h2.500" stroke="#4a9b4a" />
        <path d="M4 15V11c0-1.500 8-1.500 8 0v4h-2v-3H6v3z" fill="#8fcbea" stroke="#4d9ccb" strokeWidth=".5" />
      </>
    ),
  },
  {
    label: 'Word',
    open: true,
    icon: (
      <>
        <path d="M5.500 1.500h9.500v13H5.500z" fill="#fff" stroke="#5c7eb8" strokeWidth=".7" />
        <path d="M9 4.500h5M9 7h5M9 9.500h5M7 12h7" stroke="#6d8fc9" />
        <path d="M1 3l9-1v11l-9-1z" fill="#dbe7f8" stroke="#2a5197" strokeWidth=".7" />
        <path d="M2.500 4.500l1.300 6L5.500 6l1.700 4.500 1.300-6" fill="none" stroke="#24509c" strokeWidth="1.3" />
      </>
    ),
  },
  {
    label: 'Opera',
    icon: <ellipse cx="8" cy="8" rx="5.3" ry="5.9" fill="none" stroke="#dc1522" strokeWidth="3.2" />,
  },
  {
    label: 'Media Player',
    icon: (
      <>
        <path d="M1.500 2h12.500v12H1.500z" fill="#8dbcdf" stroke="#5f97c4" strokeWidth=".6" />
        <circle cx="7.5" cy="8" r="5" fill="#f08a1d" stroke="#fbe3bd" strokeWidth=".8" />
        <path d="M6 5.200l4.600 2.800L6 10.800z" fill="#fff" />
      </>
    ),
  },
];

function Taskbar() {
  return (
    <nav aria-label="Taskbar" className="flex h-5 shrink-0 items-stretch bg-gradient-to-r from-[#9fb7d5] via-[#a9c1df] via-80% to-[#6d86a4] to-92%">
      <button type="button" aria-label="Start" className="flex w-[27px] items-center justify-center">
        <svg width="18" height="18" viewBox="0 0 18 18" aria-hidden="true">
          <circle cx="9" cy="9" r="8.4" fill="#245b93" stroke="#4c7198" strokeWidth=".8" />
          <ellipse cx="9" cy="5" rx="6.4" ry="4" fill="#78a9d1" opacity=".7" />
          <path d="M4 5.500c1.500-1 3-1 4.300-.2v3.500C7 8 5.500 8 4 9z" fill="#ef6a2e" />
          <path d="M9.200 5.500c1.500.9 3 .9 4.800 0v3.300c-1.600 1-3.300 1-4.800.2z" fill="#9bcb3d" />
          <path d="M4 10c1.500-1 3-1 4.300-.2v3.500C7 12.500 5.500 12.500 4 13.500z" fill="#4fa9e8" />
          <path d="M9.200 10c1.500.9 3 .9 4.800 0v3.300c-1.600 1-3.300 1-4.800.2z" fill="#fbd03b" />
        </svg>
      </button>
      <div className="flex gap-px pl-0.5">
        {apps.map((app) => (
          <button
            key={app.label}
            type="button"
            aria-label={app.label}
            className={`flex w-[30px] items-center justify-center border-x border-t ${app.open ? 'border-[#708cb0] bg-gradient-to-b from-[#dde7f2] to-[#bccee3]' : 'border-transparent'}`}
          >
            <svg width="16" height="16" viewBox="0 0 16 16" aria-hidden="true">{app.icon}</svg>
          </button>
        ))}
      </div>
      <div className="ml-auto flex items-center gap-2 text-center text-white">
        <svg width="4" height="3" viewBox="0 0 4 3" aria-hidden="true"><path d="M0 2.500L2 .3l2 2.200z" fill="#fff" /></svg>
        <svg width="6" height="8" viewBox="0 0 6 8" aria-hidden="true"><path d="M2 .8h2v.8h1v5.800H1V1.600h1z" fill="#fff" stroke="#3d4b60" strokeWidth=".7" /></svg>
        <svg width="7" height="8" viewBox="0 0 7 8" aria-hidden="true"><path d="M.3 2.800h1.600L4 .8v6.400L1.900 5.200H.3z" fill="#fff" /><path d="M5 2.500c.8.900.8 2.100 0 3" stroke="#fff" fill="none" strokeWidth=".8" /></svg>
      </div>
      <div className="w-10 self-center text-center leading-[9px] text-white">
        <p>5:10 AM</p>
        <p>3/12/2021</p>
      </div>
      <button type="button" aria-label="Show desktop" className="h-5 w-1.5 border-l border-[#43546b] bg-[#7488a3]" />
    </nav>
  );
}

// ── App ───────────────────────────────────────────────────────────────────────

export default function App() {
  return (
    <div className="relative flex h-screen flex-col overflow-hidden bg-[#9cbce6] font-[Roboto,sans-serif] text-[6px] leading-[8px]">
      <TitleBar />
      <TabRow />
      <button type="button" aria-label="Office menu" className="absolute top-px left-px"><OfficeLogo /></button>

      <div className="flex h-[46px] shrink-0 items-stretch gap-px border-b border-[#8fb0dd] bg-[#d5e5f8] px-0.5 pt-px pb-px">
        <ClipboardGroup />
        <FontGroup />
        <ParagraphGroup />
        <StylesGroup />
        <EditingGroup />
      </div>

      {/* Tab selector and ruler */}
      <div className="flex h-3 shrink-0 items-center">
        <button type="button" aria-label="Tab selector" className="flex h-[11px] w-3 items-center justify-center border border-[#7d9fd0] bg-[#c5d9f3]">
          <svg width="6" height="6" viewBox="0 0 6 6" fill="none" aria-hidden="true"><path d="M0 0h6v6H0z" fill="#eaf1fb" /><path d="M2 1v3.400h3" stroke="#1e2f55" strokeWidth="1.2" /></svg>
        </button>
        <div className="flex flex-1 justify-center"><HorizontalRuler /></div>
        <button type="button" aria-label="View ruler" className="flex h-3 w-[9px] flex-col items-center gap-0.5 border-t border-[#2b2b33] pt-0.5">
          <svg width="7" height="6" viewBox="0 0 7 6" aria-hidden="true"><path d="M.5.5h6v5h-6z" fill="#e9e4ea" stroke="#8088a0" strokeWidth=".7" /><path d="M2 2h3v2H2z" fill="none" stroke="#8088a0" strokeWidth=".6" /></svg>
        </button>
      </div>

      <main className="flex min-h-0 flex-1">
        <div className="flex w-3 shrink-0"><VerticalRuler /></div>
        <div className="relative flex flex-1 justify-center overflow-hidden bg-gradient-to-b from-[#a0bfe8] via-[#557eb1] via-75% to-[#6893d2]">
          <svg width="101" height="60" viewBox="0 0 101 60" className="absolute top-0 left-0" aria-hidden="true">
            <path d="M0 0h101v14C66 22 32 33 0 47z" fill="#c6daf2" opacity=".6" />
            <path d="M0 47c32-14 66-25 101-33v2C64 25 30 39 0 58z" fill="#b4cdef" opacity=".5" />
          </svg>
          <div className="relative flex"><DocumentPage /></div>
        </div>
        <ScrollRail />
      </main>

      <StatusBar />
      <Taskbar />
    </div>
  );
}
